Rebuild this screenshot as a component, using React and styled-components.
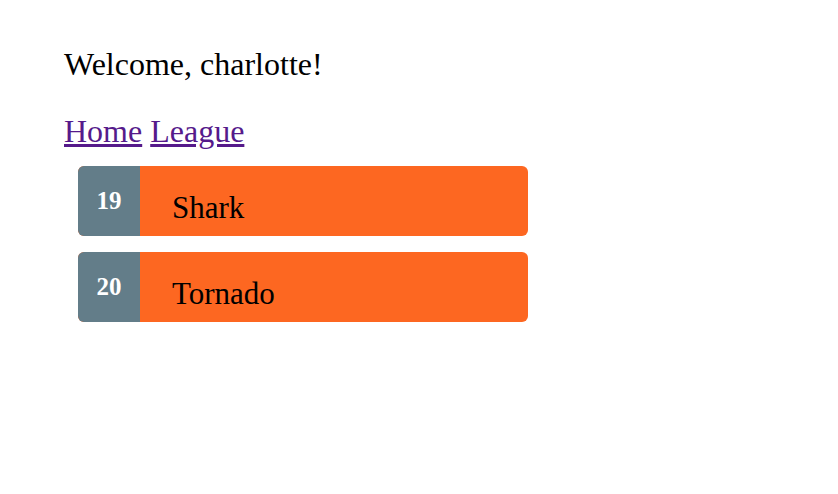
import React from 'react';
import styled, { createGlobalStyle } from 'styled-components';

const GlobalStyle = createGlobalStyle`
    body {
        margin: 0;
        background: #fff;
        font-family: "Liberation Serif", "Times New Roman", serif;
    }
`;

const Page = styled.div`
    padding: 46px 64px;
    color: #000;
`;

const Greeting = styled.p`
    margin: 0 0 30px;
    font-size: 32px;
    line-height: 37px;
`;

const Nav = styled.nav`
    margin-bottom: 16px;
    font-size: 32px;
    line-height: 37px;

    a {
        color: #551a8b;
        text-decoration: underline;
    }
`;

const TeamList = styled.ul`
    list-style: none;
    margin: 0;
    padding: 0 0 0 14px;
    display: flex;
    flex-direction: column;
    gap: 16px;
`;

const TeamRow = styled.li`
    width: 450px;
    height: 70px;
    display: flex;
    border-radius: 6px;
    overflow: hidden;
    background: #fd6721;
`;

const Rank = styled.div`
    width: 62px;
    flex-shrink: 0;
    display: flex;
    align-items: center;
    justify-content: center;
    background: #637d89;
    color: #fff;
    font-size: 25px;
    font-weight: bold;
`;

const TeamName = styled.div`
    padding: 24px 0 0 32px;
    font-size: 31px;
    line-height: 36px;
`;

const teams = [
    { rank: 19, name: 'Shark' },
    { rank: 20, name: 'Tornado' },
];

const App = () => {
    return (
        <>
            <GlobalStyle />
            <Page>
                <Greeting>Welcome, charlotte!</Greeting>
                <Nav>
                    <a href="#home">Home</a> <a href="#league">League</a>
                </Nav>
                <TeamList>
                    {teams.map(team => (
                        <TeamRow key={team.rank}>
                            <Rank>{team.rank}</Rank>
                            <TeamName>{team.name}</TeamName>
                        </TeamRow>
                    ))}
                </TeamList>
            </Page>
        </>
    );
};

export default App;
